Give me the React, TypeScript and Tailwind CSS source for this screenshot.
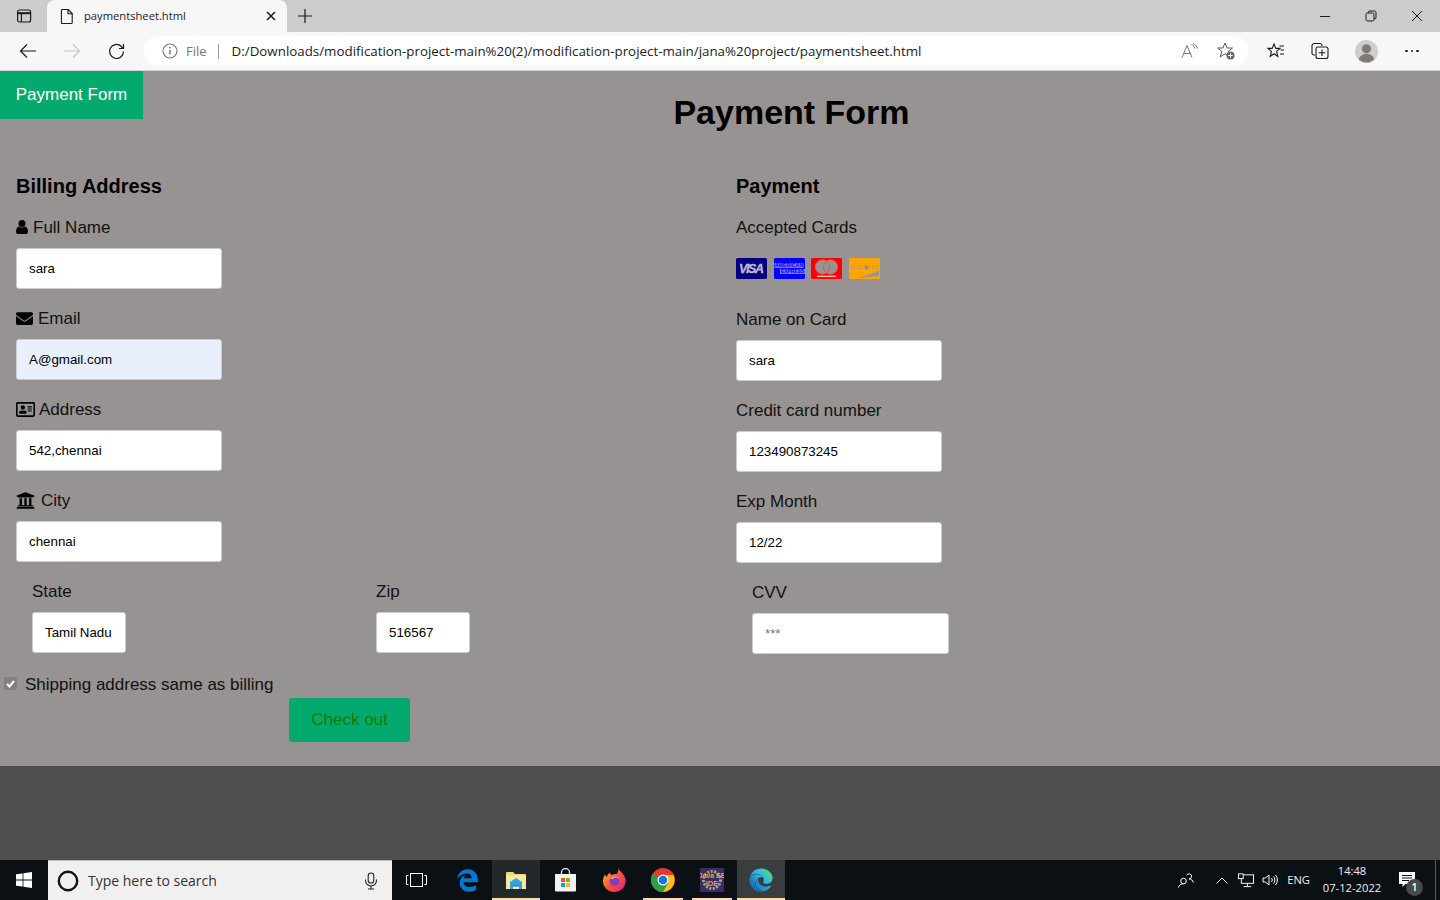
import React from "react";
import { FaEnvelope, FaRegAddressCard, FaUniversity, FaEdge, FaEdgeLegacy } from "react-icons/fa";

const ui = { fontFamily: '"Open Sans", "Noto Sans", sans-serif' };
const arial = { fontFamily: '"Liberation Sans", Arial, sans-serif' };

function Field({ icon, label, value, placeholder, w = "w-[206px]", bg = "bg-white", gap = "gap-[5px]" }: { icon?: React.ReactNode; label: string; value?: string; placeholder?: string; w?: string; bg?: string; gap?: string }) {
  return (
    <div className="h-[91px]">
      <div className={`flex items-center h-5 mb-[10px] text-[17px] text-[#111] ${gap}`}>
        {icon}
        <span>{label}</span>
      </div>
      <input readOnly defaultValue={value} placeholder={placeholder} className={`block h-[41px] ${w} ${bg} border border-[#ccc] rounded-[3px] pl-3 text-[13.33px] text-black outline-none placeholder:text-[#757575]`} />
    </div>
  );
}

function CardLogos() {
  return (
    <div className="flex gap-[6.5px] h-[21px] mt-5 mb-[31px]">
      <svg width="31" height="21" viewBox="0 0 31 21">
        <rect width="31" height="21" rx="1.5" fill="#000080" />
        <text x="15.5" y="15" textAnchor="middle" fontSize="12.5" fontWeight="700" fontStyle="italic" fill="#bdbbd6" stroke="#bdbbd6" strokeWidth="0.3" fontFamily="Liberation Sans" textLength="25">VISA</text>
      </svg>
      <svg width="31" height="21" viewBox="0 0 31 21">
        <rect width="31" height="21" rx="1.5" fill="#0000ff" />
        <rect x="0.5" y="5" width="29" height="5" fill="#7a7ae6" />
        <rect x="6" y="11" width="25" height="5" fill="#7a7ae6" />
        <text x="1" y="9.4" fontSize="5" fill="#0000ff" fontFamily="Liberation Sans" fontWeight="700" textLength="28">AMERICAN</text>
        <text x="7" y="15.4" fontSize="5" fill="#0000ff" fontFamily="Liberation Sans" fontWeight="700" textLength="23">EXPRESS</text>
      </svg>
      <svg width="31" height="21" viewBox="0 0 31 21">
        <rect width="31" height="21" rx="1.5" fill="#ff0000" />
        <circle cx="11.5" cy="9" r="7.2" fill="#979392" />
        <circle cx="19.5" cy="9" r="7.2" fill="#979392" />
        <circle cx="11.5" cy="9" r="7.2" fill="none" stroke="#f05050" strokeWidth="1" />
        <circle cx="19.5" cy="9" r="7.2" fill="none" stroke="#f05050" strokeWidth="1" />
        <rect x="6" y="17.6" width="19" height="1.5" fill="#ffb0b0" />
      </svg>
      <svg width="31" height="21" viewBox="0 0 31 21">
        <rect width="31" height="21" rx="1.5" fill="#ffa500" />
        <path d="M6 20.5 L30 18 V12 Q20 18 6 20.5Z" fill="#979392" />
        <text x="1.2" y="11" fontSize="4.9" fill="#b9967a" fontFamily="Liberation Sans" textLength="28.5">DISCOVER</text>
        <circle cx="17.5" cy="9.4" r="2" fill="#8f8a99" />
      </svg>
    </div>
  );
}

function BrowserChrome() {
  const s = "#1a1a1a";
  return (
    <div style={ui}>
      <div className="h-8 bg-[#cccccc] flex">
        <div className="w-[47px] flex items-center justify-center">
          <svg width="16" height="16" viewBox="0 0 16 16" fill="none" stroke={s} strokeWidth="1.2">
            <rect x="1.6" y="2" width="13" height="12" rx="2" />
            <path d="M1.6 5.2h13" strokeWidth="2" />
            <path d="M5.4 5v9" />
          </svg>
        </div>
        <div className="w-[240px] h-8 bg-[#f7f7f7] rounded-t-[8px] flex items-center pl-[13px] pr-[11px]">
          <svg width="14" height="16" viewBox="0 0 14 16" fill="none" stroke={s} strokeWidth="1.1">
            <path d="M2.2 1.5h6l4 4v9.2a.8.8 0 0 1-.8.8H2.2a.8.8 0 0 1-.8-.8V2.3a.8.8 0 0 1 .8-.8z" />
            <path d="M8 1.5v4.2h4.2" />
          </svg>
          <span className="ml-[10px] text-[11.2px] text-[#222] flex-1">paymentsheet.html</span>
          <svg width="10" height="10" viewBox="0 0 10 10" stroke={s} strokeWidth="1.5"><path d="M1 1l8 8M9 1l-8 8" /></svg>
        </div>
        <div className="w-9 flex items-center justify-center">
          <svg width="16" height="16" viewBox="0 0 16 16" stroke={s} strokeWidth="1.2"><path d="M8 1v14M1 8h14" /></svg>
        </div>
        <div className="flex-1" />
        <div className="flex items-center">
          <div className="w-[46px] flex justify-center">
            <svg width="12" height="12" viewBox="0 0 12 12" stroke={s} strokeWidth="1"><path d="M1 6.5h10" /></svg>
          </div>
          <div className="w-[46px] flex justify-center">
            <svg width="12" height="12" viewBox="0 0 12 12" fill="none" stroke={s} strokeWidth="1"><rect x="1" y="3" width="8" height="8" rx="1.5" /><path d="M3.2 3V2.2A1.2 1.2 0 0 1 4.4 1H9.2A1.8 1.8 0 0 1 11 2.8V7.6A1.2 1.2 0 0 1 9.8 8.8H9" /></svg>
          </div>
          <div className="w-[46px] flex justify-center">
            <svg width="12" height="12" viewBox="0 0 12 12" stroke={s} strokeWidth="1"><path d="M1 1l10 10M11 1L1 11" /></svg>
          </div>
        </div>
      </div>
      <div className="h-[39px] bg-[#f7f7f7] border-b border-[#d2d2d2] flex items-center">
        <div className="w-[144px] flex items-center">
          <div className="w-[56px] flex justify-center">
            <svg width="18" height="16" viewBox="0 0 18 16" fill="none" stroke={s} strokeWidth="1.2"><path d="M17 8H1.5M8 1.5L1.5 8 8 14.5" /></svg>
          </div>
          <div className="w-[32px] flex justify-center">
            <svg width="18" height="16" viewBox="0 0 18 16" fill="none" stroke="#c4c4c4" strokeWidth="1.2"><path d="M1 8h15.5M10 1.5L16.5 8 10 14.5" /></svg>
          </div>
          <div className="w-[56px] flex justify-center">
            <svg width="17" height="17" viewBox="0 0 17 17" fill="none" stroke={s} strokeWidth="1.2"><path d="M15.5 8.5a7 7 0 1 1-2.4-5.3L15.5 5.5" /><path d="M15.5 1v4.5H11" /></svg>
          </div>
        </div>
        <div className="w-[1104px] h-[30px] bg-white rounded-[15px] flex items-center pl-[18px] pr-[12px]">
          <svg width="16" height="16" viewBox="0 0 16 16" fill="none" stroke="#777" strokeWidth="1.1"><circle cx="8" cy="8" r="7" /><path d="M8 7v4.6" strokeWidth="1.4" /><circle cx="8" cy="4.7" r=".9" fill="#777" stroke="none" /></svg>
          <span className="ml-2 text-[13px] text-[#777] mt-px">File</span>
          <span className="ml-[11px] w-px h-[15px] bg-[#999]" />
          <span className="ml-[13px] text-[13.35px] text-[#222] flex-1 mt-px">D:/Downloads/modification-project-main%20(2)/modification-project-main/jana%20project/paymentsheet.html</span>
          <svg width="18" height="16" viewBox="0 0 18 16" fill="none" stroke="#777" strokeWidth="1"><path d="M1 14.5L6 2.5l5 12M2.800 10.500h6.400" /><path d="M10.500 1.500c2 .8 3 2.300 3.300 4M12 0.500c2.400 1 4 3 4.500 5" /></svg>
          <svg className="ml-[17px]" width="20" height="20" viewBox="0 0 20 20" fill="none" stroke="#555" strokeWidth="1"><path d="M9 2l2.200 5h5.300l-4.200 3.400 1.600 5.400L9 12.800 4.200 15.800l1.600-5.400L1.600 7h5.300z" /><circle cx="14.500" cy="14.500" r="4" fill="#666" stroke="none" /><path d="M14.500 12.300v4.400M12.300 14.500h4.400" stroke="#fff" strokeWidth="1.100" /></svg>
        </div>
        <div className="flex-1 flex items-center">
          <div className="w-[56px] flex justify-center">
            <svg width="18" height="18" viewBox="0 0 18 18" fill="none" stroke={s} strokeWidth="1.1"><path d="M7 2l1.800 4.400h4.200L9.600 9.400l1.200 5L7 11.700 3.200 14.400l1.200-5L1 6.400h4.200zM12.500 4H17M13.500 8H17M13 12h4" /></svg>
          </div>
          <div className="w-[32px] flex justify-center">
            <svg width="18" height="18" viewBox="0 0 18 18" fill="none" stroke={s} strokeWidth="1.1"><path d="M4 13H2.800A1.800 1.800 0 0 1 1 11.200V3.800A2.300 2.300 0 0 1 3.300 1.500h6A1.800 1.800 0 0 1 11 3.300V4" /><rect x="5" y="5" width="12" height="11.500" rx="2" /><path d="M11 7.500v6.500M7.700 10.700h6.600" /></svg>
          </div>
          <div className="w-[60px] flex justify-center">
            <svg width="23" height="23" viewBox="0 0 23 23"><circle cx="11.500" cy="11.500" r="11.500" fill="#d0cdcb" /><circle cx="11.500" cy="8.800" r="4.600" fill="#7e7a78" /><path d="M3.800 19.500c1-4 4-5.400 7.700-5.400s6.700 1.400 7.700 5.400a11.500 11.500 0 0 1-15.400 0z" fill="#7e7a78" /></svg>
          </div>
          <div className="w-[32px] flex justify-center gap-[3px]">
            <span className="w-[2.5px] h-[2.5px] rounded-full bg-[#222]" />
            <span className="w-[2.5px] h-[2.5px] rounded-full bg-[#222]" />
            <span className="w-[2.5px] h-[2.5px] rounded-full bg-[#222]" />
          </div>
        </div>
      </div>
    </div>
  );
}

function Slot({ children, active, line, w = "w-[48px]" }: { children: React.ReactNode; active?: string; line?: string; w?: string }) {
  return (
    <div className={`relative h-10 ${w} flex items-center justify-center ${active ?? ""}`}>
      {children}
      {line && <span className={`absolute bottom-0 h-[2px] bg-[#fddcb4] ${line}`} />}
    </div>
  );
}

function Taskbar() {
  return (
    <div className="h-10 bg-[#0b1014] flex items-center text-white" style={ui}>
      <svg width="0" height="0" className="absolute">
        <defs>
          <linearGradient id="eg" x1="0.9" y1="0.1" x2="0.1" y2="0.9">
            <stop offset="0" stopColor="#55d97c" />
            <stop offset="0.4" stopColor="#2fb8e6" />
            <stop offset="1" stopColor="#0f5fb0" />
          </linearGradient>
        </defs>
      </svg>
      <div className="w-12 flex justify-center">
        <svg width="16" height="16" viewBox="0 0 16 16" fill="#fff"><path d="M0 2.300l6.600-.9v6.200H0zM7.400 1.300L16 0v7.600H7.400zM0 8.400h6.600v6.200L0 13.700zM7.400 8.400H16V16l-8.600-1.300z" /></svg>
      </div>
      <div className="w-[344px] h-10 bg-[#f0f0f0] border-t border-[#b8b8b8] flex items-center pl-[9px] pr-[14px]">
        <svg width="22" height="22" viewBox="0 0 22 22" fill="none" stroke="#111" strokeWidth="2.400"><circle cx="11" cy="11" r="9.200" /></svg>
        <span className="ml-[9px] text-[14px] text-[#333] flex-1">Type here to search</span>
        <svg width="14" height="18" viewBox="0 0 14 18" fill="none" stroke="#222" strokeWidth="1.100"><rect x="4.200" y="1" width="5.600" height="10" rx="2.800" /><path d="M1.500 7.500v1a5.500 5.500 0 0 0 11 0v-1M7 14v3M4 17h6" /></svg>
      </div>
      <div className="flex items-center">
        <Slot w="w-[51px] pr-[3px]">
          <svg width="21" height="14" viewBox="0 0 21 14" fill="none" stroke="#fff" strokeWidth="1"><rect x="4.500" y=".5" width="12" height="13" /><path d="M2.500 2.500H.5v9h2M18.500 2.500h2v9h-2" /></svg>
        </Slot>
        <div className="flex gap-px">
          <Slot>
            <FaEdgeLegacy size={23} className="text-[#0478d4]" />
          </Slot>
          <Slot active="bg-[#23282b]" line="left-0 right-0">
            <svg width="22" height="20" viewBox="0 0 22 20"><path d="M1 3a1 1 0 0 1 1-1h6l2 2h10a1 1 0 0 1 1 1v14H1z" fill="#f6d57e" /><path d="M1 5h20v14H1z" fill="#fbe6a2" /><path d="M5 12l6-4 6 4v7h-3v-4H8v4H5z" fill="#2ea8dc" /><rect x="8" y="15" width="6" height="1.500" fill="#1e7fb4" /></svg>
          </Slot>
          <Slot>
            <svg width="23" height="24" viewBox="0 0 23 24"><path d="M7.500 6V4.500a4 4 0 0 1 8 0V6" fill="none" stroke="#d9d9d9" strokeWidth="1.400" /><path d="M1 6h21v16.500a1 1 0 0 1-1 1H2a1 1 0 0 1-1-1z" fill="#f2f2f2" /><rect x="7" y="10" width="4" height="4" fill="#f25022" /><rect x="12" y="10" width="4" height="4" fill="#7fba00" /><rect x="7" y="15" width="4" height="4" fill="#00a4ef" /><rect x="12" y="15" width="4" height="4" fill="#ffb900" /></svg>
          </Slot>
          <Slot>
            <svg width="23" height="24" viewBox="0 0 23 24"><defs><linearGradient id="ff" x1="0" y1="0" x2="1" y2="1"><stop offset="0" stopColor="#ffbd2e" /><stop offset=".5" stopColor="#ff5634" /><stop offset="1" stopColor="#e31587" /></linearGradient></defs><path d="M15 0c1 3 6 5 7.500 11 1 7-4 13-11 13S0 19 0 13c0-3 1-5 2-6.500C2.500 8 3 8.500 4 9c0-2 1.500-4 4-4.500-1 1-1 2 0 2.500 2-1 4.500-1 5.500-1C15 5 16 2 15 0z" fill="url(#ff)" /><circle cx="11.500" cy="13" r="5" fill="#7b3fc4" /><path d="M7 11c3-4 8-3 10 0-2-1-5-2-7 0z" fill="#ffa436" /></svg>
          </Slot>
          <Slot line="left-[4px] right-[4px]">
            <svg width="24" height="24" viewBox="0 0 24 24"><circle cx="12" cy="12" r="12" fill="#e33b2e" /><path d="M12 12L1.600 6A12 12 0 0 0 12 24l5.200-9z" fill="#319f43" /><path d="M12 7h10.400A12 12 0 0 1 12 24l5.200-9z" fill="#fbc116" /><circle cx="12" cy="12" r="5.500" fill="#fff" /><circle cx="12" cy="12" r="4.300" fill="#1a73e8" /></svg>
          </Slot>
          <Slot line="left-[4px] right-[4px]">
            <svg width="24" height="24" viewBox="0 0 24 24"><rect width="24" height="24" rx="1" fill="#3d2b64" /><circle cx="12" cy="12" r="8.500" fill="none" stroke="#a8a0a0" strokeWidth="3" strokeDasharray="2 1.500" /><text x="12" y="10" textAnchor="middle" fontSize="7" fontWeight="700" fill="#f0a030" fontFamily="Liberation Sans">Java EE</text><text x="12" y="18" textAnchor="middle" fontSize="7.500" fontWeight="700" fill="#f0a030" fontFamily="Liberation Sans">IDE</text></svg>
          </Slot>
          <Slot active="bg-[#3a3d3f]" line="left-0 right-0">
            <FaEdge size={24} className="fill-[url(#eg)]" />
          </Slot>
        </div>
      </div>
      <div className="flex-1" />
      <svg width="16" height="15" viewBox="0 0 16 15" fill="none" stroke="#fff" strokeWidth="1"><circle cx="5.500" cy="8" r="2.800" /><path d="M.5 14.500c.5-2.500 2.500-3.700 5-3.700M11 6a2.600 2.600 0 1 0-2.400-3.600M11 6c2.200 0 3.800 1.300 4.300 3.500" /></svg>
      <svg className="ml-[22px]" width="12" height="7" viewBox="0 0 12 7" fill="none" stroke="#fff" strokeWidth="1"><path d="M.5 6.500l5.500-5.500 5.500 5.500" /></svg>
      <svg className="ml-[10px]" width="16" height="15" viewBox="0 0 17 15" fill="none" stroke="#fff" strokeWidth="1"><rect x="3.500" y="1.500" width="13" height="9" /><path d="M10 10.500v3M6 14h8" /><rect x=".5" y=".5" width="5" height="5" fill="#0b1014" /></svg>
      <svg className="ml-[8px]" width="16" height="14" viewBox="0 0 16 14" fill="none" stroke="#fff" strokeWidth="1"><path d="M1 5h2.500L7 2v10L3.500 9H1zM9.500 5a3 3 0 0 1 0 4M11.500 3.500a5 5 0 0 1 0 7M13.500 2a7.500 7.500 0 0 1 0 10" /></svg>
      <span className="ml-[9px] text-[11.2px] text-[#eee]">ENG</span>
      <div className="ml-[11px] -mt-[2px] w-[62px] flex flex-col items-center text-[11.2px] leading-[17px] text-[#eee]">
        <span>14:48</span>
        <span>07-12-2022</span>
      </div>
      <div className="relative w-[52px] h-10 flex items-center justify-center pr-1">
        <svg width="16" height="16" viewBox="0 0 16 16" fill="#fff"><path d="M0 0h16v12H6.500L3.500 15v-3H0z" /><path d="M3 3.500h10M3 6h10M3 8.500h7" stroke="#0b1014" strokeWidth="1" /></svg>
        <span className="absolute left-[23px] top-[19px] w-[17px] h-[17px] rounded-full bg-[#4a4a4a] text-[10.5px] font-semibold flex items-center justify-center">1</span>
      </div>
      <div className="w-[5px] h-10 border-l border-[#555]" />
    </div>
  );
}

function UserIcon() {
  return (
    <svg className="-mt-[2px]" width="12" height="14" viewBox="0 0 12 14" fill="#000">
      <circle cx="6" cy="3.600" r="3.500" />
      <path d="M0 12c0-3 1-5.200 3-5.500.8.700 1.900 1.100 3 1.100s2.200-.4 3-1.100c2 .3 3 2.500 3 5.500 0 1.300-.9 2-2 2H2c-1.100 0-2-.7-2-2z" />
    </svg>
  );
}

export default function App() {
  return (
    <div className="w-[1440px] h-[900px] overflow-hidden flex flex-col bg-[#4f4f4f]">
      <BrowserChrome />
      <div className="h-[695px] bg-[#979392] text-black" style={arial}>
        <div className="flex h-[84px] items-start">
          <div className="w-[143px] h-12 bg-[#04aa6d] text-white text-[17px] flex items-center justify-center">Payment Form</div>
          <h1 className="flex-1 text-center text-[34px] font-bold leading-[83px]">Payment Form</h1>
        </div>
        <div className="flex pt-[19px]">
          <div className="w-[720px] pl-4">
            <h3 className="h-6 leading-6 mb-5 text-[20px] font-bold">Billing Address</h3>
            <Field icon={<UserIcon />} label="Full Name" value="sara" />
            <Field icon={<FaEnvelope size={17} className="text-black -mt-[2px]" />} label="Email" value="A@gmail.com" bg="bg-[#e8f0fe]" />
            <Field icon={<FaRegAddressCard size={19} className="text-black -mt-[2px]" />} label="Address" value="542,chennai" gap="gap-[4px]" />
            <Field icon={<FaUniversity size={19} className="text-black -mt-[2px]" />} label="City" value="chennai" gap="gap-[6px]" />
            <div className="flex pl-4">
              <div className="w-[344px]"><Field label="State" value="Tamil Nadu" w="w-[94px]" /></div>
              <Field label="Zip" value="516567" w="w-[94px]" />
            </div>
          </div>
          <div className="flex-1 pl-4">
            <h3 className="h-6 leading-6 mb-5 text-[20px] font-bold">Payment</h3>
            <div className="h-5 leading-5 text-[17px] text-[#111]">Accepted Cards</div>
            <CardLogos />
            <Field label="Name on Card" value="sara" />
            <Field label="Credit card number" value="123490873245" />
            <Field label="Exp Month" value="12/22" />
            <div className="pl-4"><Field label="CVV" placeholder="***" w="w-[197px]" /></div>
          </div>
        </div>
        <label className="flex items-center h-5 text-[17px] text-[#111]">
          <span className="relative ml-[4px] -mt-px w-[13px] h-[13px] flex items-center justify-center rounded-[2px] bg-[#808080]">
            <input type="checkbox" readOnly checked className="appearance-none absolute inset-0" />
            <svg width="9" height="8" viewBox="0 0 9 8" fill="none" stroke="#fff" strokeWidth="2"><path d="M1 4l2.500 2.500L8 1" /></svg>
          </span>
          <span className="ml-2 mt-[2px]">Shipping address same as billing</span>
        </label>
        <button className="block ml-[289px] mt-[4px] w-[121px] h-11 rounded-[3px] bg-[#04aa6d] text-[#008000] text-[17px]">Check out</button>
      </div>
      <div className="flex-1" />
      <Taskbar />
    </div>
  );
}
